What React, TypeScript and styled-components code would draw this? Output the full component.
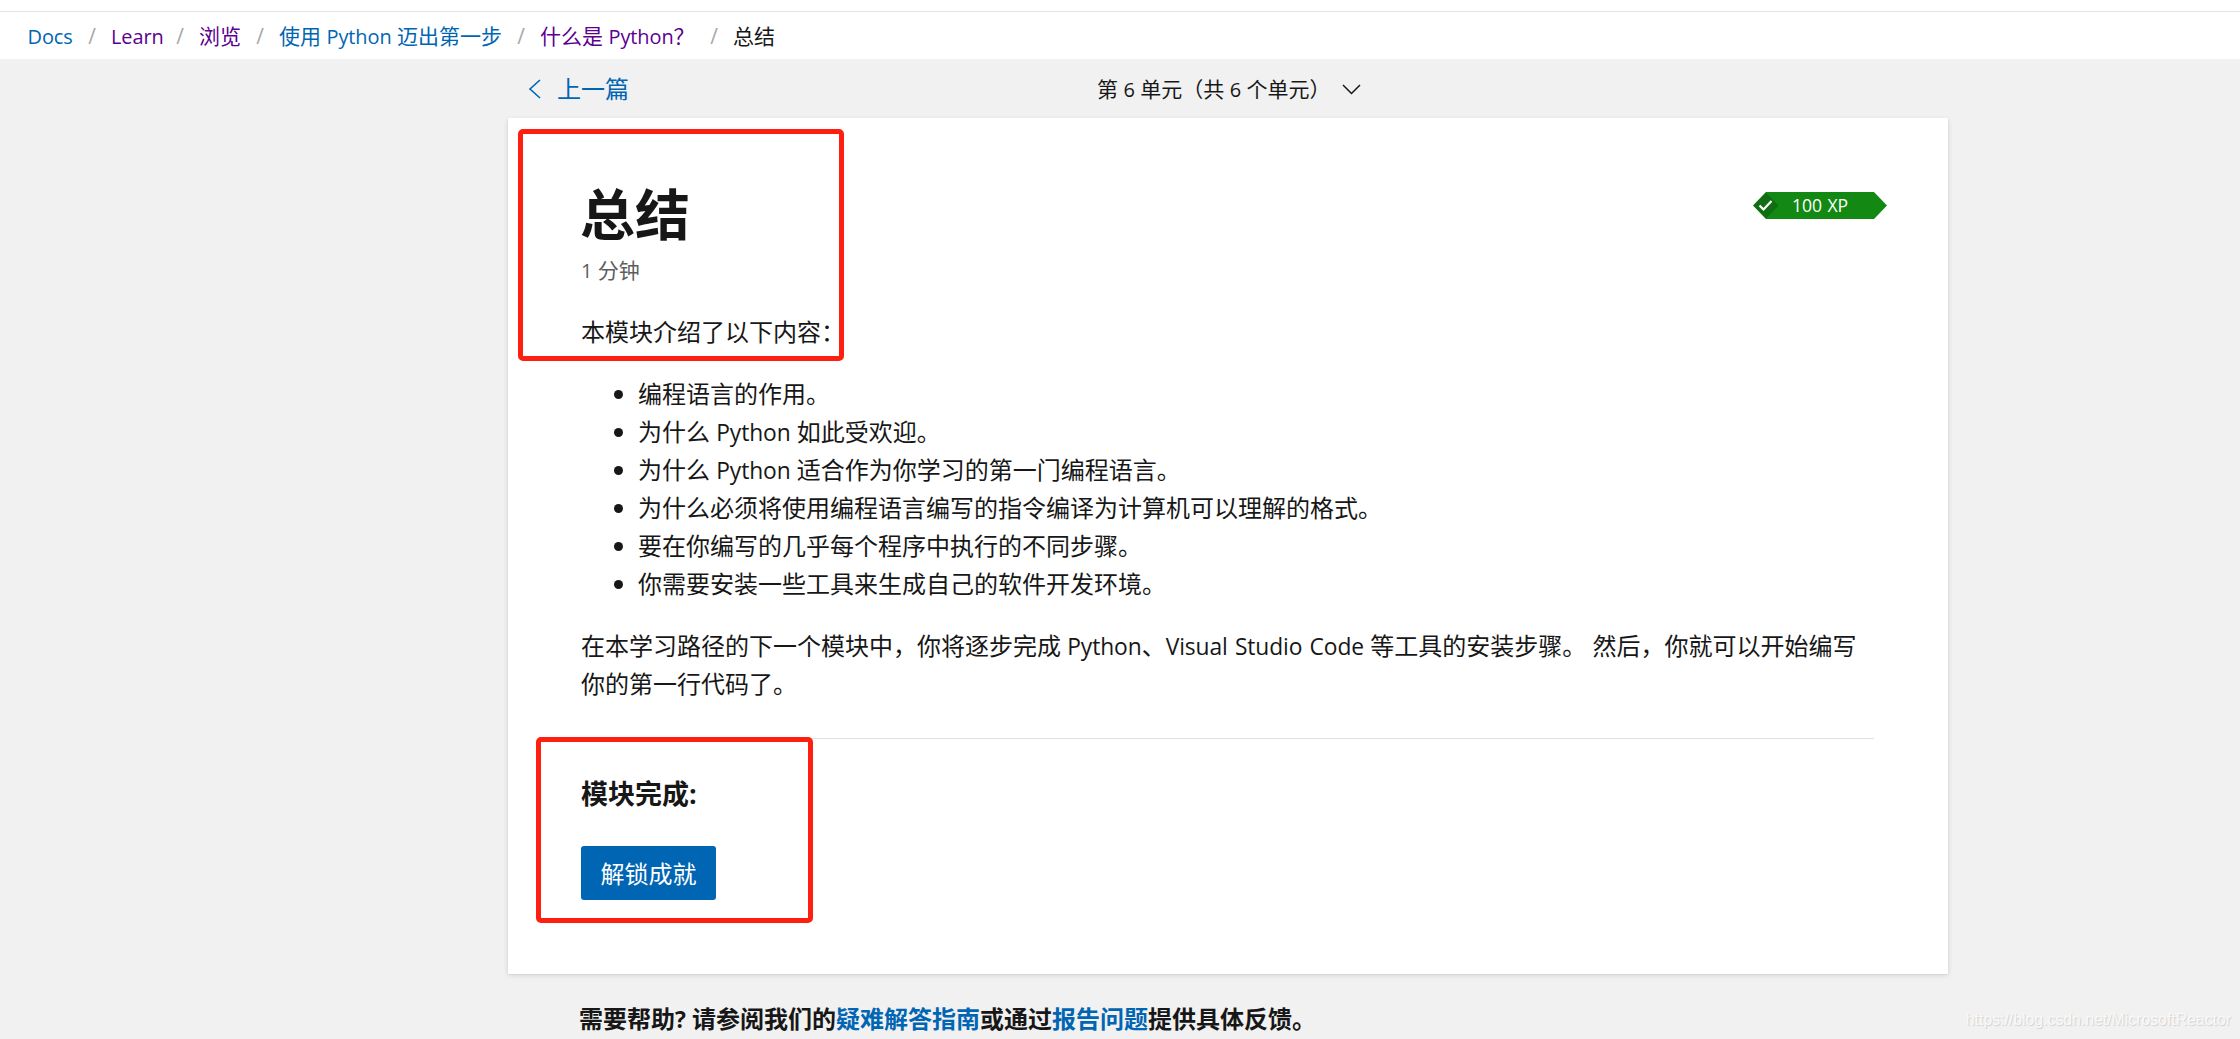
import React from 'react';
import styled, { createGlobalStyle } from 'styled-components';

const Global = createGlobalStyle`
  * { box-sizing: border-box; }
  html, body { margin: 0; padding: 0; }
  body {
    background: #f1f1f1;
    color: #171717;
    font-family: "Open Sans", "Noto Sans CJK SC", sans-serif;
    font-size: 24px;
    line-height: 38px;
    overflow: hidden;
  }
  a { text-decoration: none; color: #0065b3; }
`;

const Page = styled.div`
  position: relative;
  height: 1039px;
  overflow: hidden;
  display: flex;
  flex-direction: column;
`;

const TopStrip = styled.div`
  height: 12px;
  flex: none;
  background: #fff;
  border-bottom: 1px solid #e3e3e3;
`;

const Breadcrumbs = styled.nav`
  height: 47px;
  flex: none;
  background: #fff;
  padding: 1px 0 0 27.5px;
  display: flex;
  align-items: center;
  font-size: 21px;
  line-height: 30px;
  white-space: nowrap;
`;

const Crumb = styled.a<{ $visited?: boolean; $width: number }>`
  width: ${p => p.$width}px;
  color: ${p => (p.$visited ? '#5c0090' : '#0065b3')};
`;

const Slash = styled.span`
  width: 38px;
  text-align: center;
  color: #a8a8a8;
`;

const Latin = styled.span`
  font-size: 0.95em;
  line-height: 1;
  letter-spacing: -0.004em;
  word-spacing: 0.06em;
`;

const UnitNav = styled.div`
  width: 1440px;
  height: 59px;
  flex: none;
  margin-left: 508px;
  display: grid;
  grid-template-columns: 589px 1fr;
  align-items: center;
`;

const Previous = styled.a`
  display: flex;
  align-items: center;
  padding-left: 20px;
  gap: 16px;
`;

const UnitPicker = styled.div`
  display: flex;
  align-items: center;
  gap: 11px;
  padding-top: 1px;
  font-size: 21px;
  line-height: 30px;
`;

const Card = styled.main`
  width: 1440px;
  height: 856px;
  flex: none;
  margin-left: 508px;
  padding: 62px 74px 0 73px;
  background: #fff;
  box-shadow: 0 2.4px 5.4px rgba(0, 0, 0, 0.13), 0 0.5px 1.4px rgba(0, 0, 0, 0.11);
`;

const TitleRow = styled.header`
  display: flex;
  justify-content: space-between;
  align-items: flex-start;
  height: 70px;
  margin-right: -13px;
`;

const Title = styled.h1`
  margin: -1px 0 0 -1px;
  font-size: 55px;
  line-height: 70px;
  font-weight: 700;
`;

const XpBadge = styled.div`
  position: relative;
  width: 134px;
  height: 27px;
  margin-top: 12px;
  color: #fff;
  font-size: 18.5px;
  line-height: 25px;
  text-align: center;
`;

const BadgeShape = styled.svg`
  position: absolute;
  inset: 0;
`;

const BadgeText = styled.span`
  position: relative;
`;

const Duration = styled.p`
  margin: 5px 0 0;
  font-size: 21px;
  line-height: 30px;
  color: #5e5e5e;
`;

const Paragraph = styled.p<{ $top: number }>`
  margin: ${p => p.$top}px 0 0;
`;

const Topics = styled.ul`
  list-style: none;
  margin: 24px 0 0;
  padding: 0 0 0 33px;
`;

const Topic = styled.li`
  display: flex;
  align-items: center;
  gap: 15px;
  height: 38px;
  white-space: pre;
  &::before {
    content: '';
    width: 9px;
    height: 9px;
    border-radius: 50%;
    background: #171717;
  }
`;

const Divider = styled.hr`
  height: 1px;
  border: 0;
  margin: 35px 0 0;
  background: #e1e1e1;
`;

const Subheading = styled.h2`
  margin: 35px 0 0;
  font-size: 27px;
  line-height: 40px;
  font-weight: 700;
`;

const UnlockButton = styled.button`
  display: block;
  width: 135px;
  height: 54px;
  margin: 32px 0 0;
  padding: 1px 0 0;
  border: 0;
  border-radius: 3px;
  background: #0065b3;
  color: #fff;
  font: inherit;
`;

const Help = styled.footer`
  margin: 26px 0 0 579px;
  font-weight: 700;
  white-space: pre;
`;

const Highlight = styled.div<{ $x: number; $y: number; $w: number; $h: number }>`
  position: absolute;
  left: ${p => p.$x}px;
  top: ${p => p.$y}px;
  width: ${p => p.$w}px;
  height: ${p => p.$h}px;
  border: 5px solid #ff1f10;
  border-radius: 5px;
  pointer-events: none;
`;

const Watermark = styled.div`
  position: absolute;
  right: 9px;
  bottom: 10px;
  font: 15.8px/18px "Liberation Sans", Arial, sans-serif;
  color: #f9f9f9;
  text-shadow: 1px 1px 1px #cfcfcf;
`;

export default function App() {
  return (
    <Page lang="zh-CN">
      <Global />
      <TopStrip />
      <Breadcrumbs>
        <Crumb $width={45.5}><Latin>Docs</Latin></Crumb><Slash>/</Slash>
        <Crumb $visited $width={50}><Latin>Learn</Latin></Crumb><Slash>/</Slash>
        <Crumb $visited $width={42}>浏览</Crumb><Slash>/</Slash>
        <Crumb $width={223}>使用 <Latin>Python</Latin> 迈出第一步</Crumb><Slash>/</Slash>
        <Crumb $visited $width={155}>什么是 <Latin>Python</Latin>？</Crumb><Slash>/</Slash>
        <span>总结</span>
      </Breadcrumbs>
      <UnitNav>
        <Previous>
          <svg width="13" height="20" viewBox="0 0 13 20" fill="none" stroke="#0065b3" strokeWidth="1.6">
            <path d="M12 1 2 10l10 9" />
          </svg>
          <span>上一篇</span>
        </Previous>
        <UnitPicker>
          <span>第 <Latin>6</Latin> 单元（共 <Latin>6</Latin> 个单元）</span>
          <svg width="19" height="11" viewBox="0 0 19 11" fill="none" stroke="#171717" strokeWidth="1.5">
            <path d="M1 1l8.5 8.5L18 1" />
          </svg>
        </UnitPicker>
      </UnitNav>
      <Card>
        <TitleRow>
          <Title>总结</Title>
          <XpBadge>
            <BadgeShape width="134" height="27" viewBox="0 0 134 27">
              <path d="M13 0h108l13 13.5L121 27H13L0 13.5z" fill="#138813" />
              <path d="M13 0.5l12.5 13L13 26.5 0.5 13.5z" fill="#116d13" />
              <path d="M6.5 13.5l4 4L18.5 9" fill="none" stroke="#fff" strokeWidth="2.2" />
            </BadgeShape>
            <BadgeText><Latin>100 XP</Latin></BadgeText>
          </XpBadge>
        </TitleRow>
        <Duration><Latin>1</Latin> 分钟</Duration>
        <Paragraph $top={28}>本模块介绍了以下内容：</Paragraph>
        <Topics>
          <Topic><span>编程语言的作用。</span></Topic>
          <Topic><span>为什么 <Latin>Python</Latin> 如此受欢迎。</span></Topic>
          <Topic><span>为什么 <Latin>Python</Latin> 适合作为你学习的第一门编程语言。</span></Topic>
          <Topic><span>为什么必须将使用编程语言编写的指令编译为计算机可以理解的格式。</span></Topic>
          <Topic><span>要在你编写的几乎每个程序中执行的不同步骤。</span></Topic>
          <Topic><span>你需要安装一些工具来生成自己的软件开发环境。</span></Topic>
        </Topics>
        <Paragraph $top={24}>
          在本学习路径的下一个模块中，你将逐步完成 <Latin>Python</Latin>、<Latin>Visual Studio Code</Latin> 等工具的安装步骤。 然后，你就可以开始编写<br />
          你的第一行代码了。
        </Paragraph>
        <Divider />
        <Subheading>模块完成:</Subheading>
        <UnlockButton>解锁成就</UnlockButton>
      </Card>
      <Help>需要帮助<Latin>?</Latin> 请参阅我们的<a>疑难解答指南</a>或通过<a>报告问题</a>提供具体反馈。</Help>
      <Highlight $x={518} $y={129} $w={326} $h={232} />
      <Highlight $x={536} $y={737} $w={277} $h={186} />
      <Watermark>https://blog.csdn.net/MicrosoftReactor</Watermark>
    </Page>
  );
}
